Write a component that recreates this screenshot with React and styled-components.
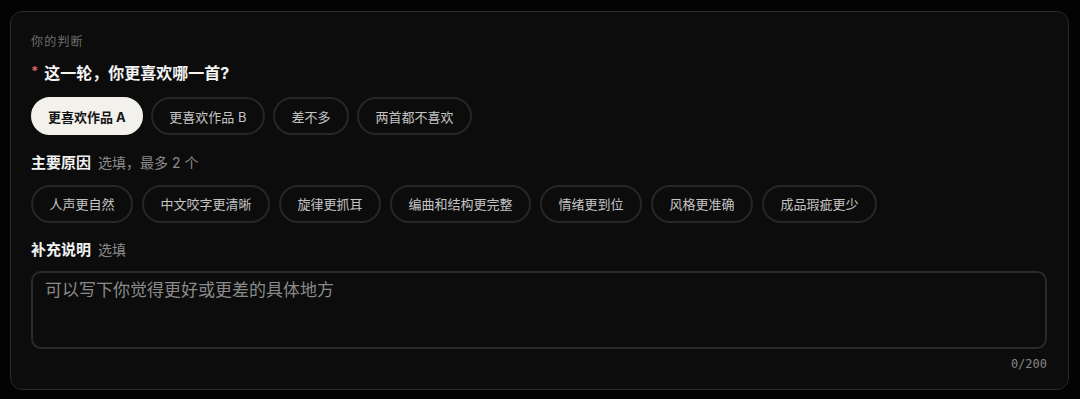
import React from "react";
import styled, { createGlobalStyle } from "styled-components";

const Global = createGlobalStyle`
  html, body { margin: 0; padding: 0; background: #030303; }
  body { font-family: "Inter", "Noto Sans CJK SC", sans-serif; color: #f2f2f2; }
  * { box-sizing: border-box; }
`;

const Page = styled.div`
  padding: 11px 11px 10px 10px;
`;

const Card = styled.section`
  display: flex;
  flex-direction: column;
  background: #0c0c0c;
  border: 1px solid #2a2a2a;
  border-radius: 12px;
  padding: 21px 21px 16px 20px;
`;

const Eyebrow = styled.div`
  font-size: 12px;
  line-height: 18px;
  letter-spacing: 1.2px;
  color: #6c6c6c;
`;

const Question = styled.h2`
  display: flex;
  align-items: center;
  gap: 6px;
  margin: 10px 0 0;
  font-size: 16px;
  line-height: 24px;
  font-weight: 700;
  color: #f4f4f4;
`;

const Required = styled.span`
  color: #d96464;
  font-size: 13px;
  line-height: 1;
  margin-top: -3px;
`;

const Row = styled.div`
  display: flex;
  flex-wrap: wrap;
  gap: ${(p) => p.$gap}px;
  margin-top: ${(p) => p.$top}px;
`;

const Chip = styled.button`
  height: 38px;
  padding: 0 ${(p) => (p.$selected ? 15 : 16.5)}px;
  border-radius: 19px;
  border: 2px solid ${(p) => (p.$selected ? "#f2f1ec" : "#262626")};
  background: ${(p) => (p.$selected ? "#f2f1ec" : "transparent")};
  color: ${(p) => (p.$selected ? "#151515" : "#c4c4c4")};
  font-family: inherit;
  font-size: 13px;
  font-weight: ${(p) => (p.$selected ? 700 : 400)};
  white-space: nowrap;
  cursor: pointer;
`;

const Label = styled.div`
  display: flex;
  align-items: baseline;
  gap: 7px;
  margin-top: ${(p) => p.$top}px;
  font-size: 15px;
  line-height: 22.5px;
  font-weight: 700;
  color: #f2f2f2;
`;

const Hint = styled.span`
  font-size: 14px;
  font-weight: 400;
  color: #8a8a8a;
`;

const Note = styled.textarea`
  display: block;
  width: 100%;
  height: 78px;
  margin-top: 10px;
  padding: 5px 12px;
  border: 2px solid #2a2a2a;
  border-radius: 10px;
  background: transparent;
  color: #e0e0e0;
  font-family: inherit;
  font-size: 17px;
  line-height: 1.5;
  resize: none;
  outline: none;
  &::placeholder { color: #8a8a8a; }
`;

const Counter = styled.div`
  margin-top: 6px;
  text-align: right;
  font-family: "DejaVu Sans Mono", monospace;
  font-size: 12px;
  line-height: 18px;
  color: #858585;
`;

const choices = ["更喜欢作品 A", "更喜欢作品 B", "差不多", "两首都不喜欢"];
const reasons = [
  "人声更自然",
  "中文咬字更清晰",
  "旋律更抓耳",
  "编曲和结构更完整",
  "情绪更到位",
  "风格更准确",
  "成品瑕疵更少",
];

export default function App() {
  return (
    <Page>
      <Global />
      <Card>
        <Eyebrow>你的判断</Eyebrow>
        <Question>
          <Required>*</Required>
          这一轮，你更喜欢哪一首?
        </Question>
        <Row $top={12} $gap={8}>
          {choices.map((c, i) => (
            <Chip key={c} $selected={i === 0}>{c}</Chip>
          ))}
        </Row>
        <Label $top={17}>
          主要原因<Hint>选填，最多 2 个</Hint>
        </Label>
        <Row $top={10} $gap={9}>
          {reasons.map((r) => (
            <Chip key={r}>{r}</Chip>
          ))}
        </Row>
        <Label $top={16}>
          补充说明<Hint>选填</Hint>
        </Label>
        <Note placeholder="可以写下你觉得更好或更差的具体地方" />
        <Counter>0/200</Counter>
      </Card>
    </Page>
  );
}
